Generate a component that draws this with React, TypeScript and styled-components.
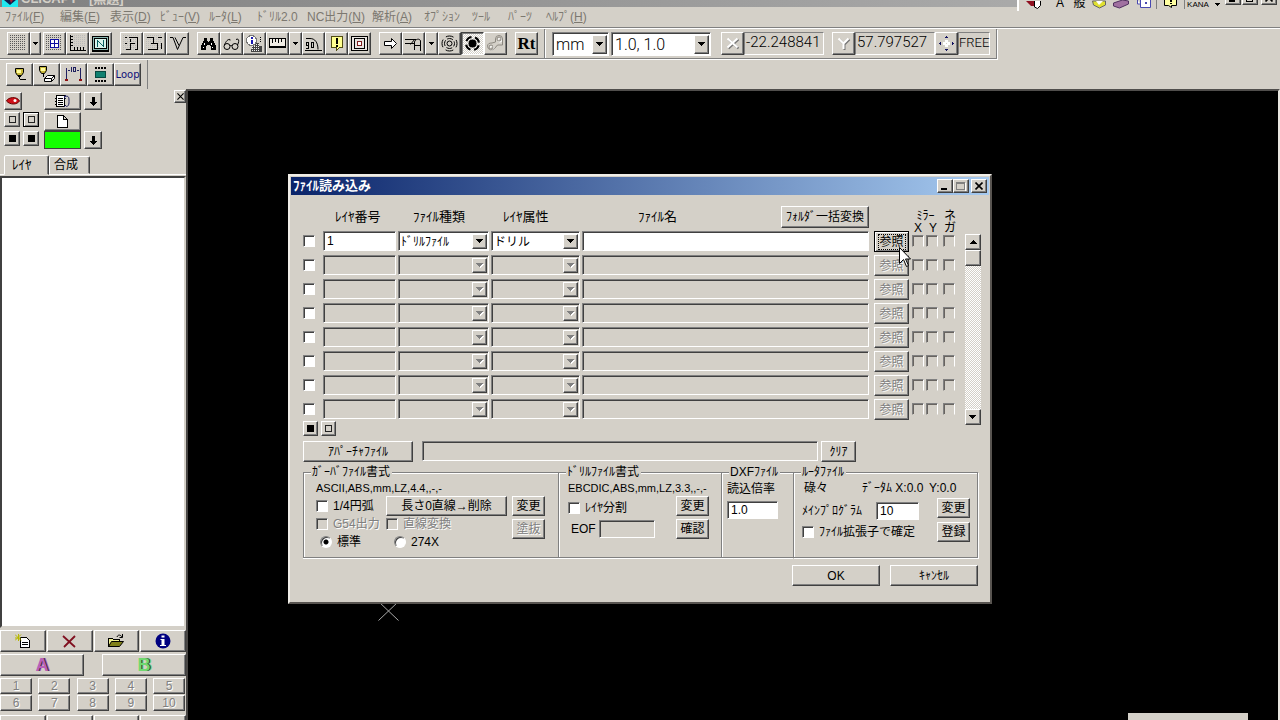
import React from "react";
import styled, { createGlobalStyle, css } from "styled-components";

const face = "#d4d0c8";
const shade = "#808080";
const dark = "#404040";

const Global = createGlobalStyle`
  * { box-sizing: border-box; }
  html, body, #root { height: 100%; }
  body {
    margin: 0;
    overflow: hidden;
    background: ${face};
    color: #000;
    font-family: "Liberation Sans", "Noto Sans CJK JP", sans-serif;
    font-size: 12px;
    line-height: 16px;
  }
  button, input, select { font: inherit; color: inherit; margin: 0; padding: 0; border-radius: 0; outline: 0; }
  svg { display: block; flex: none; }
`;

const raised = css`
  background: ${face};
  border: 1px solid;
  border-color: #fff ${dark} ${dark} #fff;
  box-shadow: inset -1px -1px 0 ${shade};
`;
const sunken = css`
  border: 1px solid;
  border-color: ${shade} #fff #fff ${shade};
  box-shadow: inset 1px 1px 0 ${dark};
`;

/* ---------- application frame ---------- */

const Frame = styled.div`
  display: flex;
  flex-direction: column;
  height: 100vh;
  background: ${face};
`;

const Caption = styled.header`
  position: relative;
  display: flex;
  align-items: flex-end;
  height: 7px;
  flex: none;
  background: linear-gradient(90deg, #808080, #b4b4b4);
`;
const CaptionClip = styled.div`
  display: flex;
  align-items: flex-end;
  gap: 3px;
  height: 7px;
  padding-left: 2px;
  overflow: hidden;
  color: ${face};
  font-weight: bold;
  font-size: 13px;
`;

const LangBar = styled.div`
  position: absolute;
  top: 0;
  right: 0;
  display: flex;
  width: 263px;
  height: 11px;
  background: ${face};
  border-left: 2px solid #fff;
  overflow: hidden;
`;
const LangItem = styled.div<{ $w: number; $sep?: boolean; $mid?: boolean }>`
  display: flex;
  align-items: ${(p) => (p.$mid ? "center" : "flex-end")};
  justify-content: center;
  width: ${(p) => p.$w}px;
  height: 9px;
  line-height: 12px;
  border-right: ${(p) => (p.$sep ? "1px solid #808080" : "0")};
`;
const Kana = styled(LangItem)`
  font-size: 8px;
  line-height: 8px;
`;
const CapButtons = styled.div`
  display: flex;
  gap: 1px;
  height: 5px;
  align-items: flex-end;
  margin-left: auto;
  padding-right: 3px;
`;
const CapButton = styled.button`
  ${raised}
  display: grid;
  place-items: center;
  width: 16px;
  height: 14px;
  flex: none;
  &:last-child { margin-left: 2px; }
`;

const Menu = styled.nav`
  display: grid;
  grid-template-columns: 55px 50px 50px 49px 48px 50px 65px 52px 48px 36px 38px auto;
  height: 21px;
  flex: none;
  padding: 2px 0 2px 5px;
  border-bottom: 1px solid ${shade};
  a {
    color: #7c7870;
    text-decoration: none;
    white-space: nowrap;
  }
`;

const Band = styled.div<{ $second?: boolean }>`
  display: flex;
  flex: none;
  height: ${(p) => (p.$second ? 29 : 32)}px;
  border-top: ${(p) => (p.$second ? "0" : "1px solid #fff")};
`;
const Bar = styled.div<{ $pad: number; $line?: boolean }>`
  display: flex;
  align-items: flex-start;
  padding: 3px 6px 3px ${(p) => p.$pad}px;
  border-right: 1px solid ${shade};
  ${(p) => p.$line && css`border-bottom: 1px solid ${shade}; box-shadow: 0 1px 0 #fff, 1px 1px 0 #fff; height: 30px;`}
`;
const Cluster = styled.div<{ $gap?: number }>`
  display: flex;
  margin-right: ${(p) => p.$gap ?? 8}px;
`;
const Tool = styled.button<{ $w?: number; $pressed?: boolean }>`
  ${raised}
  display: grid;
  place-items: center;
  width: ${(p) => p.$w ?? 23}px;
  height: 23px;
  flex: none;
  ${(p) => p.$pressed && css`
    border-color: ${dark} #fff #fff ${dark};
    box-shadow: inset 1px 1px 0 ${shade};
    background: repeating-conic-gradient(#fff 0 25%, ${face} 0 50%) 0 0 / 2px 2px;
  `}
`;
const RtText = styled.span`
  font: bold 17px/19px "Liberation Serif", serif;
`;
const LoopText = styled.span`
  font: 10px/14px "DejaVu Sans", sans-serif;
  color: #101078;
`;
const Readout = styled.output<{ $w: number; $small?: boolean }>`
  display: block;
  width: ${(p) => p.$w}px;
  height: 23px;
  padding-left: ${(p) => (p.$small ? 0 : 1)}px;
  border: 1px solid;
  border-color: ${shade} #fff #fff ${shade};
  font: 300 ${(p) => (p.$small ? 13 : 15)}px/19px Roboto, "Liberation Sans", sans-serif;
  white-space: nowrap;
`;

/* ---------- shared form controls ---------- */

const ComboFrame = styled.span<{ $w?: number; $big?: boolean; $off?: boolean }>`
  ${sunken}
  display: flex;
  width: ${(p) => (p.$w ? p.$w + "px" : "auto")};
  height: ${(p) => (p.$big ? 24 : 20)}px;
  margin-right: 2px;
  padding: 2px 1px 1px 2px;
  background: ${(p) => (p.$off ? face : "#fff")};
  min-width: 0;
  select {
    flex: 1;
    min-width: 0;
    appearance: none;
    border: 0;
    background: transparent;
    font-size: 12px;
    line-height: 16px;
    opacity: 1;
    ${(p) => p.$big && css`padding-left: 1px; font: 300 16px/18px Roboto, "Liberation Sans", sans-serif;`}
  }
`;
const ComboArrow = styled.span`
  ${raised}
  display: grid;
  place-items: center;
  width: 15px;
  flex: none;
`;
const Field = styled.input<{ $w?: number; $mr?: number }>`
  ${sunken}
  width: ${(p) => (p.$w ? p.$w + "px" : "auto")};
  height: 20px;
  min-width: 0;
  margin-right: ${(p) => p.$mr ?? 0}px;
  padding: 0 3px;
  background: #fff;
  font-size: 12px;
  &:disabled { background: ${face}; }
`;
const SmallField = styled(Field)`
  height: 18px;
`;
const Check = styled.input.attrs({ type: "checkbox" })<{ $half?: boolean }>`
  appearance: none;
  ${sunken}
  width: 12px;
  height: 12px;
  flex: none;
  background: #fff;
  &:disabled { background: ${face}; }
  ${(p) => p.$half && css`
    border-color: ${shade} #fff transparent ${shade};
    margin-top: 4px;
    box-shadow: inset 1px 1px 0 #686460;
  `}
`;
const RowCheck = styled(Check)`
  margin-top: 4px;
`;
const Radio = styled.input.attrs({ type: "radio" })`
  appearance: none;
  width: 12px;
  height: 12px;
  flex: none;
  border: 1px solid;
  border-color: ${shade} #fff #fff ${shade};
  border-radius: 50%;
  background: #fff;
  box-shadow: inset 1px 1px 0 ${dark};
  &:checked { background: radial-gradient(circle, #000 0 2px, #fff 3px); }
`;
const Button = styled.button<{ $w?: number; $h?: number; $focus?: boolean }>`
  ${raised}
  width: ${(p) => p.$w ?? 33}px;
  height: ${(p) => p.$h ?? 20}px;
  flex: none;
  display: grid;
  place-items: center;
  font-size: 12px;
  line-height: 16px;
  white-space: nowrap;
  &:disabled { color: ${shade}; text-shadow: 1px 1px 0 #fff; }
  ${(p) => p.$focus && css`
    border-color: #000;
    box-shadow: inset 1px 1px 0 #fff, inset -1px -1px 0 ${shade};
    span { outline: 1px dotted #000; height: 14px; line-height: 14px; width: 26px; }
  `}
`;
const Label = styled.label<{ $off?: boolean }>`
  display: flex;
  align-items: center;
  gap: 5px;
  white-space: nowrap;
  ${(p) => p.$off && css`color: ${shade}; text-shadow: 1px 1px 0 #fff;`}
`;

/* ---------- work area and layer panel ---------- */

const Work = styled.div`
  display: flex;
  flex: 1;
  min-height: 0;
`;
const Panel = styled.aside`
  position: relative;
  display: flex;
  flex-direction: column;
  width: 186px;
  flex: none;
`;
const PanelClose = styled.button`
  ${raised}
  position: absolute;
  top: 1px;
  right: 0;
  display: grid;
  place-items: center;
  width: 12px;
  height: 13px;
`;
const Swatches = styled.div`
  display: grid;
  grid-template-columns: 19px 21px 40px 18px;
  grid-template-rows: 20px 19px 19px;
  padding: 3px 0 0 4px;
  height: 66px;
  flex: none;
`;
const PBtn = styled.button<{ $w: number; $h?: number; $fill?: string; $bold?: boolean }>`
  ${raised}
  display: grid;
  place-items: center;
  width: ${(p) => p.$w}px;
  height: ${(p) => p.$h ?? 18}px;
  ${(p) => p.$fill && css`background: ${p.$fill}; border-color: ${dark}; box-shadow: none;`}
  ${(p) => p.$bold && css`border-color: #000; box-shadow: inset 1px 1px 0 #fff, inset -1px -1px 0 ${shade};`}
`;
const Tabs = styled.div`
  display: flex;
  align-items: flex-end;
  height: 20px;
  flex: none;
  padding-left: 4px;
  border-bottom: 1px solid #fff;
`;
const Tab = styled.button<{ $w: number; $on?: boolean }>`
  width: ${(p) => p.$w}px;
  height: ${(p) => (p.$on ? 20 : 18)}px;
  margin-bottom: ${(p) => (p.$on ? -1 : 0)}px;
  background: ${face};
  border: 1px solid;
  border-color: #fff ${dark} transparent #fff;
  border-radius: 2px 2px 0 0;
  box-shadow: inset -1px 0 0 ${shade};
  text-align: left;
  font-size: ${(p) => (p.$on ? 13 : 12)}px;
  padding-left: ${(p) => (p.$on ? 7 : 4)}px;
`;
const LayerList = styled.div`
  flex: 1;
  min-height: 0;
  margin-top: 1px;
  background: #fff;
  border: 2px solid;
  border-color: ${dark} ${face} ${face} ${dark};
`;
const FourGrid = styled.div<{ $h: number; $mt: number }>`
  display: grid;
  grid-template-columns: repeat(4, 1fr);
  gap: 1px;
  height: ${(p) => p.$h}px;
  margin-top: ${(p) => p.$mt}px;
  overflow: hidden;
  flex: none;
`;
const PanelButton = styled.button`
  ${raised}
  display: grid;
  place-items: center;
  height: 22px;
`;
const ABRow = styled.div`
  display: flex;
  justify-content: space-between;
  margin-top: 2px;
  flex: none;
`;
const LetterButton = styled.button<{ $c: string }>`
  ${raised}
  width: 84px;
  height: 22px;
  font: bold 18px/18px "Liberation Sans", sans-serif;
  color: ${(p) => p.$c};
  text-shadow: 1px 0 0 #303030, 2px 0 0 ${(p) => p.$c};
`;
const Numbers = styled.div`
  display: grid;
  grid-template-columns: repeat(5, 32px);
  justify-content: space-between;
  row-gap: 1px;
  margin: 2px 1px 0 0;
  flex: none;
`;
const NumberButton = styled.button`
  ${raised}
  height: 16px;
  font-size: 12px;
  line-height: 14px;
  &:disabled { color: ${shade}; text-shadow: 1px 1px 0 #fff; }
`;

const Canvas = styled.main`
  position: relative;
  flex: 1;
  min-width: 0;
  overflow: hidden;
  background: #000;
  border: solid;
  border-width: 2px 2px 0 2px;
  border-color: #504e4c #e8e6e0 #000 #484644;
`;
const Cross = styled.svg`
  position: absolute;
  left: 190px;
  top: 510px;
`;
const Notice = styled.div`
  position: absolute;
  right: 30px;
  bottom: 0;
  width: 120px;
  height: 7px;
  background: ${face};
`;

/* ---------- dialog ---------- */

const Dialog = styled.section`
  position: absolute;
  left: 100px;
  top: 83px;
  width: 704px;
  padding: 1px;
  background: ${face};
  border: 2px solid;
  border-color: #f0eee8 #585450 #585450 #f0eee8;
`;
const DialogTitle = styled.div`
  display: flex;
  align-items: center;
  height: 18px;
  padding: 0 2px;
  background: linear-gradient(90deg, #0a246a, #a6caf0);
  color: #fff;
  h1 { margin: 0; flex: 1; font-size: 13px; line-height: 18px; font-weight: bold; }
`;
const TitleButtons = styled.div`
  display: flex;
`;
const Body = styled.form`
  padding: 0 8px 15px 12px;
`;
const Cols = styled.div`
  display: grid;
  grid-template-columns: 20px 75px 93px 91px 1fr 38px 14px 17px 14px;
  align-items: start;
`;
const Head = styled(Cols)`
  grid-template-rows: 28px;
  height: 36px;
  margin-right: 24px;
  padding-top: 8px;
  font-size: 13px;
`;
const HeadLabel = styled.span<{ $start?: number; $pl?: number }>`
  grid-column-start: ${(p) => p.$start ?? "auto"};
  align-self: center;
  padding-left: ${(p) => p.$pl ?? 0}px;
  white-space: nowrap;
`;
const HeadFile = styled.div`
  display: flex;
  align-items: center;
  justify-content: space-between;
  height: 28px;
  padding: 0 5px 0 56px;
`;
const HeadFlags = styled.div<{ $start: number; $span: number }>`
  grid-column: ${(p) => p.$start} / span ${(p) => p.$span};
  display: grid;
  justify-items: center;
  padding-top: 7px;
  padding-right: ${(p) => (p.$span > 1 ? 4 : 0)}px;
  font-size: 12px;
  line-height: 12px;
  white-space: nowrap;
`;
const Pair = styled.span`
  display: flex;
  gap: 7px;
`;
const ListArea = styled.div`
  display: flex;
  gap: 8px;
`;
const Rows = styled.div`
  flex: 1;
  min-width: 0;
`;
const Row = styled(Cols)`
  height: 21px;
  margin-bottom: 3px;
  &:nth-child(8) { margin-bottom: 1px; }
`;
const MiniRow = styled.div`
  display: flex;
  gap: 3px;
`;
const Scroll = styled.div`
  display: flex;
  flex-direction: column;
  width: 16px;
  margin: 3px 0 11px;
  background: repeating-conic-gradient(#fff 0 25%, ${face} 0 50%) 0 0 / 2px 2px;
`;
const Thumb = styled.div`
  ${raised}
  height: 16px;
  margin-bottom: auto;
`;
const Aperture = styled.div`
  display: flex;
  margin-top: 5px;
  padding-right: 125px;
`;
const ApertureField = styled(Field)`
  flex: 1;
  margin: 0 3px 0 9px;
`;
const Groups = styled.div`
  display: grid;
  grid-template-columns: 255px 163px 72px 1fr;
  margin: 4px 3px 0 0;
`;
const Group = styled.fieldset<{ $pl: number }>`
  min-width: 0;
  height: 92px;
  margin: 0;
  padding: 0 0 0 ${(p) => p.$pl}px;
  border: 1px solid ${shade};
  border-right-width: 0;
  box-shadow: 0 1px 0 #fff, inset 1px 1px 0 #fff;
  &:last-child { border-right-width: 1px; box-shadow: 1px 1px 0 #fff, inset 1px 1px 0 #fff; }
  legend {
    margin-left: ${(p) => 7 - p.$pl}px;
    padding: 0 2px 0 1px;
    height: 12px;
    line-height: 12px;
    background: ${face};
    white-space: nowrap;
  }
`;
const Spec = styled.div`
  display: flex;
  margin-top: 2px;
  height: 16px;
  font-size: 11px;
  white-space: nowrap;
`;
const Split = styled.div<{ $left: number; $mt?: number }>`
  display: grid;
  grid-template-columns: ${(p) => p.$left}px 33px;
  margin-top: ${(p) => p.$mt ?? 0}px;
`;
const Stack = styled.div<{ $gap?: number }>`
  display: flex;
  flex-direction: column;
  gap: ${(p) => p.$gap ?? 0}px;
`;
const Line = styled.div<{ $h: number; $first?: number; $pl?: number }>`
  display: grid;
  grid-template-columns: ${(p) => p.$first ?? 70}px 1fr;
  align-items: center;
  height: ${(p) => p.$h}px;
  padding-left: ${(p) => p.$pl ?? 0}px;
`;
const RouterSpec = styled.div`
  display: grid;
  grid-template-columns: 58px 67px 1fr;
  padding-left: 2px;
  margin-top: 2px;
  white-space: nowrap;
`;
const ScaleLabel = styled.label`
  margin-top: 3px;
`;
const Actions = styled.div`
  display: flex;
  justify-content: flex-end;
  gap: 10px;
  margin: 7px 3px 0 0;
`;
const Pointer = styled.svg`
  position: absolute;
  left: 609px;
  top: 71px;
`;

/* ---------- icons ---------- */

type IconProps = { w?: number; h?: number; children: React.ReactNode };
const Icon = ({ w = 17, h = 17, children }: IconProps) => (
  <svg width={w} height={h} viewBox={`0 0 ${w} ${h}`} fill="none" stroke="#000" shapeRendering="crispEdges" aria-hidden="true">
    {children}
  </svg>
);

const Dots = ({ c = "#585858", n = 8, x = 0, y = 0 }: { c?: string; n?: number; x?: number; y?: number }) => (
  <path
    stroke={c}
    strokeDasharray="1 1"
    d={Array.from({ length: n }, (_, i) => `M${x} ${y + i * 2 + 0.5}h${n * 2}`).join("")}
  />
);
const Down = ({ off }: { off?: boolean }) => (
  <Icon w={8} h={5}>
    {off && <path fill="#fff" stroke="none" d="M1 1h7v1h-1v1h-1v1h-1v1h-1v-1h-1v-1h-1v-1h-1z" />}
    <path fill={off ? shade : "#000"} stroke="none" d="M0 0h7v1h-1v1h-1v1h-1v1h-1v-1h-1v-1h-1v-1h-1z" />
  </Icon>
);
const SmallDown = () => (
  <Icon w={5} h={3}><path fill="#000" stroke="none" d="M0 0h5v1h-1v1h-1v1h-1v-1h-1v-1h-1z" /></Icon>
);
const Up = () => (
  <Icon w={7} h={4}><path fill="#000" stroke="none" d="M3 0h1v1h1v1h1v1h1v1h-7v-1h1v-1h1v-1h1z" /></Icon>
);
const ArrowDown = () => (
  <Icon w={7} h={9}><path fill="#000" stroke="none" d="M2 0h3v5h2v1h-1v1h-1v1h-1v1h-1v-1h-1v-1h-1v-1h-1v-1h2z" /></Icon>
);
const CloseMark = ({ s = 8 }: { s?: number }) => (
  <svg width={s} height={s} viewBox="0 0 8 8" stroke="#000" strokeWidth={s > 7 ? 1.6 : 1.2} aria-hidden="true"><path d="M0.5 0.5l7 7M7.5 0.5l-7 7" /></svg>
);
const Square = ({ fill }: { fill?: boolean }) => (
  <Icon w={9} h={9}><rect x="1.500" y="1.500" width="6" height="6" fill={fill ? "#000" : "none"} stroke={fill ? "#000" : "#222"} /></Icon>
);

const icons = {
  grid: <Icon><Dots /></Icon>,
  gridBlue: (
    <Icon><Dots /><rect x="4" y="4" width="9" height="9" fill="#fff" stroke="none" />
      <path stroke="#1010a0" d="M4 4.500h9M4 8.500h9M4 12.500h9M4.500 4v9M8.500 4v9M12.500 4v9" /></Icon>
  ),
  axis: (
    <Icon><Dots c="#bbb" x={3} n={7} />
      <path d="M1.500 0v16M1 15.500h16M1 1.500h3M1 4.500h3M1 7.500h3M1 10.500h3M5.500 12v4M8.500 12v4M11.500 12v4M14.500 12v4" /></Icon>
  ),
  screen: (
    <Icon><rect x=".5" y="1.500" width="16" height="14" fill="#8cb8b0" /><rect x="2.500" y="3.500" width="12" height="10" fill="#d8f4ec" />
      <path stroke="#0a6060" d="M5.500 12V5.500l6 6V5" /><path d="M0 16.500h17" /></Icon>
  ),
  traceE: (
    <Icon><Dots c="#bbb" /><path d="M2 2.500h2M6 2.500h8.500v12H12M3 14.500h4.500V9M7 8.500h5M2 8.500h2M7.500 4v3" /></Icon>
  ),
  traceH: (
    <Icon><Dots c="#bbb" /><path d="M1 2.500h6.500v5M2 14.500h9.500V8M5 8.500h7M15.500 8v6M12 2.500h4" /></Icon>
  ),
  traceV: (
    <Icon><Dots c="#ccc" /><path shapeRendering="auto" d="M1 2.500h3l4.500 12L14 2.500h3M6 2.500l4 8" /></Icon>
  ),
  binoculars: (
    <Icon><path fill="#000" stroke="none" d="M4 3h3v3h1v1h1v-1h1v-3h3v3h1v2h1v2h1v5h-5v-4h-1v-1h-3v1h-1v4h-5v-5h1v-2h1v-2h1z" />
      <path stroke="#fff" d="M4.500 8v2M11.500 8v2M3 12.500h1M12 12.500h1" /></Icon>
  ),
  glasses: (
    <Icon><g shapeRendering="auto"><circle cx="4" cy="11.500" r="3" /><circle cx="12" cy="11.500" r="3" />
      <path d="M7 11c1-1 1-1 2 0M1.500 10C3 6 5 4 7 4.500v1M14.500 10C16.500 6 16 3 13 4.500" /></g></Icon>
  ),
  infoCity: (
    <Icon><path fill="#444" stroke="none" d="M6 11h3V8h4v3h3v6H5z" /><Dots c="#eee" x={6} y={9} n={4} />
      <circle cx="5.500" cy="5.500" r="5" fill="#fff" stroke="#777" /><path stroke="#1818b0" strokeWidth="2" d="M5.500 2v2M5.500 5v4" />
      <path stroke="#000" d="M14.500 2v6" strokeDasharray="1 1" /></Icon>
  ),
  ruler: (
    <Icon><rect x=".5" y="3.500" width="16" height="9" fill="#f0ece4" /><path d="M3.500 4v4M6.500 4v3M9.500 4v4M12.500 4v3M0 11.500h17" /></Icon>
  ),
  angle: (
    <Icon><path shapeRendering="auto" d="M1 3.500h4c5 0 8 4 8 11" /><path d="M0 15.500h17" /><rect x="0" y="6" width="10" height="8" fill={face} stroke="none" />
      <path d="M1.500 7.500h2v3h-2zM3.500 10v3H1M6.500 7.500h2v5h-2z" /></Icon>
  ),
  note: (
    <Icon><path fill="#ffff90" stroke="#504c10" d="M3.500 1.500h11v11h-3l-3 3v-3h-5z" /><path strokeWidth="2" d="M9 3v6M9 10v2" /></Icon>
  ),
  nested: (
    <Icon><rect x=".5" y="1.500" width="16" height="14" fill="#e8e4e0" /><rect x="3.500" y="3.500" width="10" height="10" />
      <rect x="6.500" y="6.500" width="4" height="4" stroke="#802020" fill="#fff" /></Icon>
  ),
  arrow: (
    <Icon><path shapeRendering="auto" fill="#fff" d="M2.500 6.500h7v-3l5 5-5 5v-3h-7z" /></Icon>
  ),
  route: (
    <Icon><Dots c="#ccc" x={8} y={8} n={4} /><path shapeRendering="auto" d="M0 4.500h11M0 8.500h9M9.500 4.500l-4 5M9.500 15V7C10 4 15 3 15.500 6v10M10 10.500h5" /></Icon>
  ),
  target: (
    <Icon><g shapeRendering="auto"><circle cx="8.500" cy="8.500" r="7.500" strokeDasharray="8 3.780" strokeDashoffset="4" /><circle cx="8.500" cy="8.500" r="5" strokeDasharray="6 1.850" strokeDashoffset="3" /><circle cx="8.500" cy="8.500" r="2.500" /></g></Icon>
  ),
  targetFill: (
    <Icon><g shapeRendering="auto"><circle cx="8.500" cy="8.500" r="6.500" strokeWidth="2" strokeDasharray="6.500 3.710" strokeDashoffset="8.350" />
      <circle cx="8.500" cy="8.500" r="4" fill="#000" stroke="none" /></g></Icon>
  ),
  link: (
    <Icon><g shapeRendering="auto" stroke="#fff" transform="translate(1 1)"><circle cx="12" cy="4" r="2" /><circle cx="4" cy="12" r="2" /></g>
      <g shapeRendering="auto" stroke="#8c8880"><circle cx="12" cy="4" r="2" /><circle cx="4" cy="12" r="2" />
        <path d="M8.500 4a3.500 3.500 0 0 1 7 0v6h-5l-3 3.500a4 4 0 0 1-7-2c0-3 2-3.500 4.500-3.500l3.500-1z" /></g></Icon>
  ),
  axisX: (
    <Icon w={15}><g shapeRendering="auto"><path stroke="#777" strokeWidth="2" d="M3.500 4.500l10 9M13.500 4.500l-10 9" /><path stroke="#fff" strokeWidth="2" d="M2.500 3.500l10 9M12.500 3.500l-10 9" /></g></Icon>
  ),
  axisY: (
    <Icon w={15}><g shapeRendering="auto"><path stroke="#777" strokeWidth="2" d="M3.500 4.500l5 5 5-5M8.500 9v6" /><path stroke="#fff" strokeWidth="2" d="M2.500 3.500l5 5 5-5M7.500 8v6" /></g></Icon>
  ),
  move: (
    <Icon w={15}><path stroke="none" fill="#fff" d="M6 5h3v2h2v3h-2v2h-3v-2h-2v-3h2z" /><path stroke="none" fill={face} d="M7 8h1v1h-1z" />
      <path stroke="#101060" d="M7 1.500h1M6 2.500h3M7 15.500h1M6 14.500h3M.5 8v1M1.500 7v3M14.500 8v1M13.500 7v3" /></Icon>
  ),
  pen: (
    <Icon><path shapeRendering="auto" fill="#c8b838" d="M4.500 2.500h8v4l-2 3h-4l-2-3z" /><path fill="#fffca0" stroke="none" d="M6 4h4v3h-4z" />
      <path d="M7 10.500h3M8.500 11v2M9 13.500h6" /></Icon>
  ),
  penEraser: (
    <Icon><path shapeRendering="auto" fill="#c8b838" d="M1.500 .5h7v4l-2 3h-3l-2-3z" /><path fill="#fffca0" stroke="none" d="M3 2h4v3h-4z" /><path d="M5.500 8v3" />
      <path shapeRendering="auto" fill="#fff" d="M6.500 12.500l3-3h7l-3 3zM6.500 12.500v3h7v-3M13.500 15.500l3-3v-3" /></Icon>
  ),
  dimension: (
    <Icon><path stroke="#202060" d="M1.500 2v11M15.500 2v11M3 4.500h11" /><rect x="5" y="0" width="7" height="8" fill={face} stroke="none" />
      <path stroke="#202060" d="M6.500 1v5M8.500 1.500h2v4h-2z" /><path stroke="#901010" strokeWidth="2" d="M0 14h3M14 14h3" /></Icon>
  ),
  chip: (
    <Icon><rect x="3.500" y="5.500" width="10" height="6" fill="#108070" stroke="#084840" /><path strokeWidth="2" strokeDasharray="2 1" d="M3 2h12M3 15h12" /></Icon>
  ),
  eye: (
    <svg width="14" height="10" viewBox="0 0 14 10" aria-hidden="true"><path fill="#d01018" stroke="#600" d="M.5 5C2 1 11 0 13.500 5 11 9 4 9 .5 5z" /><circle cx="9" cy="4.500" r="1.500" fill="#fff" /></svg>
  ),
  pages: (
    <Icon w={15} h={13}><rect x="1.500" y=".5" width="8" height="11" fill="#fff" /><path d="M0 3.500h2M0 6.500h2M0 9.500h2M3 3.500h5M3 5.500h5M3 7.500h5M3 9.500h5" />
      <path shapeRendering="auto" stroke="#202060" d="M10 1.500c4-1 4 1 4 5s-1 5-3 5M11 4l-2-2 2-2M9 12l2-2" /></Icon>
  ),
  doc: (
    <Icon w={11} h={13}><path fill="#fff" d="M.5 .5h6l4 4v8h-10zM6.500 .5v4h4" /></Icon>
  ),
  newDoc: (
    <Icon w={16} h={14}><path fill="#fff" d="M5.500 3.500h6l3 3v7h-9zM7 8.500h6M7 10.500h6" /><path shapeRendering="auto" stroke="#b8b800" d="M0 .5l6 6M6 .5l-6 6M0 4h6M3.500 0v7" /></Icon>
  ),
  remove: (
    <svg width="15" height="13" viewBox="0 0 15 13" aria-hidden="true"><path stroke="#801020" strokeWidth="1.800" fill="none" d="M1 1l12 11M13 1L2 12" /></svg>
  ),
  open: (
    <Icon w={16} h={14}><path fill="#f0f090" d="M.5 12.500v-8h4l1 1h6v3" /><path shapeRendering="auto" fill="#808018" d="M.5 12.500l3-5h12l-4 5z" /><path shapeRendering="auto" d="M9 3c1-3 4-2 5 0M14.500 0v3.500h-3" /></Icon>
  ),
  info: (
    <svg width="16" height="16" viewBox="0 0 16 16" aria-hidden="true"><circle cx="8" cy="8" r="7.500" fill="#000080" /><path fill="#fff" d="M6.500 2.500h3v2h-3zM5.500 6h4v6h1.500v1h-6v-1h1.500V7h-1z" /></svg>
  ),
};

/* ---------- screen ---------- */

const menus: [string, string][] = [
  ["ﾌｧｲﾙ", "F"], ["編集", "E"], ["表示", "D"], ["ﾋﾞｭｰ", "V"], ["ﾙｰﾀ", "L"], ["ﾄﾞﾘﾙ2.0", ""],
  ["NC出力", "N"], ["解析", "A"], ["ｵﾌﾟｼｮﾝ", ""], ["ﾂｰﾙ", ""], ["ﾊﾟｰﾂ", ""], ["ﾍﾙﾌﾟ", "H"],
];

type ComboProps = { value: string; label: string; w?: number; big?: boolean; off?: boolean };
const Combo = ({ value, label, w, big, off }: ComboProps) => (
  <ComboFrame $w={w} $big={big} $off={off}>
    <select aria-label={label} disabled={off}><option>{value}</option></select>
    <ComboArrow><Down off={off} /></ComboArrow>
  </ComboFrame>
);

const FileRow = ({ n }: { n: number }) => {
  const off = n > 1;
  return (
    <Row>
      <RowCheck aria-label={`行 ${n}`} />
      <Field $mr={2} aria-label="レイヤ番号" defaultValue={off ? "" : "1"} disabled={off} />
      <Combo label="ファイル種類" value={off ? "" : "ﾄﾞﾘﾙﾌｧｲﾙ"} off={off} />
      <Combo label="レイヤ属性" value={off ? "" : "ドリル"} off={off} />
      <Field $mr={5} aria-label="ファイル名" disabled={off} />
      <Button type="button" $w={35} $h={21} $focus={!off} disabled={off}><span>参照</span></Button>
      <Check $half aria-label="ミラー X" disabled />
      <Check $half aria-label="ミラー Y" disabled />
      <Check $half aria-label="ネガ" disabled />
    </Row>
  );
};

const FileDialog = () => (
  <Dialog role="dialog" aria-labelledby="dlg-title">
    <DialogTitle>
      <h1 id="dlg-title">ﾌｧｲﾙ読み込み</h1>
      <TitleButtons>
        <CapButton aria-label="最小化"><Icon w={8} h={8}><path strokeWidth="2" d="M0 7h6" /></Icon></CapButton>
        <CapButton aria-label="最大化" disabled><Icon w={10} h={9}><path stroke="#fff" d="M9.500 1v8H1" /><path stroke={shade} d="M.5 .5h8v7h-8zM0 1.500h9" /></Icon></CapButton>
        <CapButton aria-label="閉じる"><CloseMark /></CapButton>
      </TitleButtons>
    </DialogTitle>
    <Body>
      <Head>
        <HeadLabel $start={2} $pl={12}>ﾚｲﾔ番号</HeadLabel>
        <HeadLabel $pl={15}>ﾌｧｲﾙ種類</HeadLabel>
        <HeadLabel $pl={12}>ﾚｲﾔ属性</HeadLabel>
        <HeadFile>
          <span>ﾌｧｲﾙ名</span>
          <Button type="button" $w={88} $h={22}>ﾌｫﾙﾀﾞ一括変換</Button>
        </HeadFile>
        <HeadFlags $start={7} $span={2}><span>ﾐﾗｰ</span><Pair><span>X</span><span>Y</span></Pair></HeadFlags>
        <HeadFlags $start={9} $span={1}><span>ネ</span><span>ガ</span></HeadFlags>
      </Head>
      <ListArea>
        <Rows>
          {[1, 2, 3, 4, 5, 6, 7, 8].map((n) => <FileRow key={n} n={n} />)}
          <MiniRow>
            <PBtn type="button" $w={15} $h={15} aria-label="全て選択"><Square fill /></PBtn>
            <PBtn type="button" $w={15} $h={15} aria-label="全て解除"><Square /></PBtn>
          </MiniRow>
        </Rows>
        <Scroll>
          <PBtn type="button" $w={16} $h={16} aria-label="上へ"><Up /></PBtn>
          <Thumb />
          <PBtn type="button" $w={16} $h={16} aria-label="下へ"><Down /></PBtn>
        </Scroll>
      </ListArea>
      <Aperture>
        <Button type="button" $w={110} $h={21}>ｱﾊﾟｰﾁｬﾌｧｲﾙ</Button>
        <ApertureField aria-label="アパーチャファイル" disabled />
        <Button type="button" $w={35} $h={21}>ｸﾘｱ</Button>
      </Aperture>
      <Groups>
        <Group $pl={12}>
          <legend>ｶﾞｰﾊﾞﾌｧｲﾙ書式</legend>
          <Spec>ASCII,ABS,mm,LZ,4.4,,-,-</Spec>
          <Split $left={196}>
            <Stack>
              <Line $h={20}>
                <Label><Check />1/4円弧</Label>
                <Button type="button" $w={121}>長さ0直線→削除</Button>
              </Line>
              <Line $h={16}>
                <Label $off><Check disabled />G54出力</Label>
                <Label $off><Check disabled />直線変換</Label>
              </Line>
              <Line $h={20} $pl={4} $first={74}>
                <Label><Radio name="format" defaultChecked />標準</Label>
                <Label><Radio name="format" />274X</Label>
              </Line>
            </Stack>
            <Stack $gap={3}>
              <Button type="button">変更</Button>
              <Button type="button" disabled>塗抜</Button>
            </Stack>
          </Split>
        </Group>
        <Group $pl={9}>
          <legend>ﾄﾞﾘﾙﾌｧｲﾙ書式</legend>
          <Spec>EBCDIC,ABS,mm,LZ,3.3,,-,-</Spec>
          <Split $left={108}>
            <Stack>
              <Line $h={24} $first={100}><Label><Check />ﾚｲﾔ分割</Label></Line>
              <Line $h={18} $first={28} $pl={3}>
                <label htmlFor="eof">EOF</label>
                <SmallField id="eof" $w={56} disabled />
              </Line>
            </Stack>
            <Stack $gap={3}>
              <Button type="button">変更</Button>
              <Button type="button">確認</Button>
            </Stack>
          </Split>
        </Group>
        <Group $pl={5}>
          <legend>DXFﾌｧｲﾙ</legend>
          <Stack $gap={4}>
            <ScaleLabel htmlFor="scale">読込倍率</ScaleLabel>
            <SmallField id="scale" $w={51} defaultValue="1.0" />
          </Stack>
        </Group>
        <Group $pl={8}>
          <legend>ﾙｰﾀﾌｧｲﾙ</legend>
          <RouterSpec><span>碌々</span><span>ﾃﾞｰﾀﾑ X:0.0</span><span>Y:0.0</span></RouterSpec>
          <Split $left={135} $mt={2}>
            <Stack>
              <Line $h={26} $first={74}>
                <label htmlFor="main">ﾒｲﾝﾌﾟﾛｸﾞﾗﾑ</label>
                <SmallField id="main" $w={43} defaultValue="10" />
              </Line>
              <Line $h={16} $first={130}><Label><Check />ﾌｧｲﾙ拡張子で確定</Label></Line>
            </Stack>
            <Stack $gap={4}>
              <Button type="button">変更</Button>
              <Button type="button">登録</Button>
            </Stack>
          </Split>
        </Group>
      </Groups>
      <Actions>
        <Button type="button" $w={88} $h={21}>OK</Button>
        <Button type="button" $w={88} $h={21}>ｷｬﾝｾﾙ</Button>
      </Actions>
    </Body>
    <Pointer width="13" height="21" viewBox="0 0 13 21" aria-hidden="true">
      <path fill="#fff" stroke="#000" d="M.5 .5v16l4-4 3 7 2-1-3-6.500h5z" />
    </Pointer>
  </Dialog>
);

export default function App() {
  return (
    <Frame>
      <Global />
      <Caption>
        <CaptionClip>
          <svg width="16" height="7" viewBox="0 0 16 7" aria-hidden="true"><path fill="#20e8f0" d="M0 0h16v7H0z" /><path fill="#102050" d="M2 0h12L8 5z" /><path fill="#b02030" d="M8 0h3L9 3z" /></svg>
          <span>CLICAPT - [無題]</span>
        </CaptionClip>
        <LangBar>
          <LangItem $w={30}><svg width="16" height="8" viewBox="0 0 16 8" aria-hidden="true"><path fill="#901020" d="M0 0h10v5H5z" /><path fill="#fff" stroke="#000" d="M8.500 0v6l3 1.500 3-3V0" /></svg></LangItem>
          <LangItem $w={22}>A</LangItem>
          <LangItem $w={17}>般</LangItem>
          <LangItem $w={22}><svg width="15" height="9" viewBox="0 0 15 9" aria-hidden="true"><path fill="#e0e030" stroke="#666" d="M.5 1l1 4 6 3 6-3V1z" /><path fill="#fff" d="M4 1h7l-4 4z" /></svg></LangItem>
          <LangItem $w={22}><svg width="16" height="9" viewBox="0 0 16 9" aria-hidden="true"><path fill="#a070a0" stroke="#503060" d="M.5 3l9-3 6 1v3l-9 4-6-2z" /></svg></LangItem>
          <LangItem $w={25} $sep><svg width="15" height="9" viewBox="0 0 15 9" aria-hidden="true"><path fill="#fff" stroke="#4848b0" d="M3.500 0v7.500h10V0M.5 0v4h3" /><path fill="#4848b0" d="M8 2h2v2h-2z" /></svg></LangItem>
          <LangItem $w={28} $sep><svg width="14" height="9" viewBox="0 0 14 9" aria-hidden="true"><path fill="#ffffa0" stroke="#000" d="M.5 0v5.500h4l3 2v-2h5V0" /><path fill="#000" d="M6 0h2v2h-2zM6 3h2v1h-2z" /></svg></LangItem>
          <Kana $w={26}>KANA</Kana>
          <LangItem $w={12} $mid><SmallDown /></LangItem>
          <CapButtons>
            <CapButton aria-label="最小化"><Icon w={8} h={8}><path strokeWidth="2" d="M0 7h6" /></Icon></CapButton>
            <CapButton aria-label="元に戻す"><Icon w={8} h={8}><path d="M.5 2.500h6v5h-6z" /></Icon></CapButton>
            <CapButton aria-label="閉じる"><CloseMark /></CapButton>
          </CapButtons>
        </LangBar>
      </Caption>

      <Menu>
        {menus.map(([t, k]) => (
          <a href="#" key={t}>{t}{k && <>(<u>{k}</u>)</>}</a>
        ))}
      </Menu>

      <Band>
        <Bar $pad={7} $line>
          <Cluster $gap={2}><Tool aria-label="グリッド">{icons.grid}</Tool><Tool $w={11} aria-label="グリッド選択"><SmallDown /></Tool></Cluster>
          <Cluster>
            <Tool aria-label="グリッド表示">{icons.gridBlue}</Tool><Tool aria-label="座標軸">{icons.axis}</Tool><Tool aria-label="全体表示">{icons.screen}</Tool>
          </Cluster>
          <Cluster>
            <Tool aria-label="配線 1">{icons.traceE}</Tool><Tool aria-label="配線 2">{icons.traceH}</Tool><Tool aria-label="配線 3">{icons.traceV}</Tool>
          </Cluster>
          <Cluster>
            <Tool aria-label="検索">{icons.binoculars}</Tool><Tool aria-label="表示確認">{icons.glasses}</Tool><Tool aria-label="情報">{icons.infoCity}</Tool>
            <Tool aria-label="計測">{icons.ruler}</Tool><Tool $w={13} aria-label="計測選択"><SmallDown /></Tool>
            <Tool aria-label="角度">{icons.angle}</Tool><Tool aria-label="注意">{icons.note}</Tool><Tool aria-label="枠">{icons.nested}</Tool>
          </Cluster>
          <Cluster>
            <Tool aria-label="移動">{icons.arrow}</Tool><Tool aria-label="経路">{icons.route}</Tool><Tool $w={13} aria-label="経路選択"><SmallDown /></Tool>
            <Tool aria-label="サーマル">{icons.target}</Tool><Tool $pressed aria-label="塗りつぶし">{icons.targetFill}</Tool><Tool aria-label="接続" disabled>{icons.link}</Tool>
          </Cluster>
          <Tool><RtText>Rt</RtText></Tool>
        </Bar>
        <Bar $pad={7} $line>
          <Combo big w={57} label="単位" value="mm" />
          <Cluster><Combo big w={100} label="グリッド間隔" value="1.0, 1.0" /></Cluster>
          <Cluster><Tool aria-label="X">{icons.axisX}</Tool><Readout $w={80}>-22.248841</Readout></Cluster>
          <Cluster $gap={0}>
            <Tool aria-label="Y">{icons.axisY}</Tool><Readout $w={80}>57.797527</Readout>
            <Tool aria-label="移動方法">{icons.move}</Tool><Readout $w={32} $small>FREE</Readout>
          </Cluster>
        </Bar>
      </Band>
      <Band $second>
        <Bar $pad={6}>
          <Tool $w={27} aria-label="描画">{icons.pen}</Tool>
          <Tool $w={27} aria-label="消去">{icons.penEraser}</Tool>
          <Tool $w={27} aria-label="寸法">{icons.dimension}</Tool>
          <Tool $w={27} aria-label="部品">{icons.chip}</Tool>
          <Tool $w={27}><LoopText>Loop</LoopText></Tool>
        </Bar>
      </Band>

      <Work>
        <Panel>
          <PanelClose aria-label="閉じる"><CloseMark s={7} /></PanelClose>
          <Swatches>
            <PBtn $w={18} aria-label="表示">{icons.eye}</PBtn><span />
            <PBtn $w={37} aria-label="ページ">{icons.pages}</PBtn><PBtn $w={18} aria-label="下へ"><ArrowDown /></PBtn>
            <PBtn $w={16} $h={15} aria-label="解除"><Square /></PBtn><PBtn $w={16} $h={15} $bold aria-label="全解除"><Square /></PBtn>
            <PBtn $w={37} $h={19} aria-label="新規">{icons.doc}</PBtn><span />
            <PBtn $w={16} $h={15} aria-label="選択"><Square fill /></PBtn><PBtn $w={16} $h={15} aria-label="全選択"><Square fill /></PBtn>
            <PBtn $w={37} $fill="#14ff00" aria-label="色" /><PBtn $w={18} aria-label="色選択"><ArrowDown /></PBtn>
          </Swatches>
          <Tabs>
            <Tab $w={45} $on>ﾚｲﾔ</Tab>
            <Tab $w={41}>合成</Tab>
          </Tabs>
          <LayerList />
          <FourGrid $h={22} $mt={2}>
            <PanelButton aria-label="新規">{icons.newDoc}</PanelButton>
            <PanelButton aria-label="削除">{icons.remove}</PanelButton>
            <PanelButton aria-label="開く">{icons.open}</PanelButton>
            <PanelButton aria-label="情報">{icons.info}</PanelButton>
          </FourGrid>
          <ABRow>
            <LetterButton $c="#b860b8">A</LetterButton>
            <LetterButton $c="#70d870">B</LetterButton>
          </ABRow>
          <Numbers>
            {[1, 2, 3, 4, 5, 6, 7, 8, 9, 10].map((n) => <NumberButton key={n} disabled>{n}</NumberButton>)}
          </Numbers>
          <FourGrid $h={5} $mt={4}>
            <PanelButton aria-label="上" /><PanelButton aria-label="下" /><PanelButton aria-label="左" /><PanelButton aria-label="右" />
          </FourGrid>
        </Panel>
        <Canvas>
          <Cross width="21" height="21" viewBox="0 0 21 21" stroke="#a8a8a8" aria-hidden="true"><path d="M.5 .5l20 19M20.500 .5l-20 19" /></Cross>
          <FileDialog />
          <Notice />
        </Canvas>
      </Work>
    </Frame>
  );
}
